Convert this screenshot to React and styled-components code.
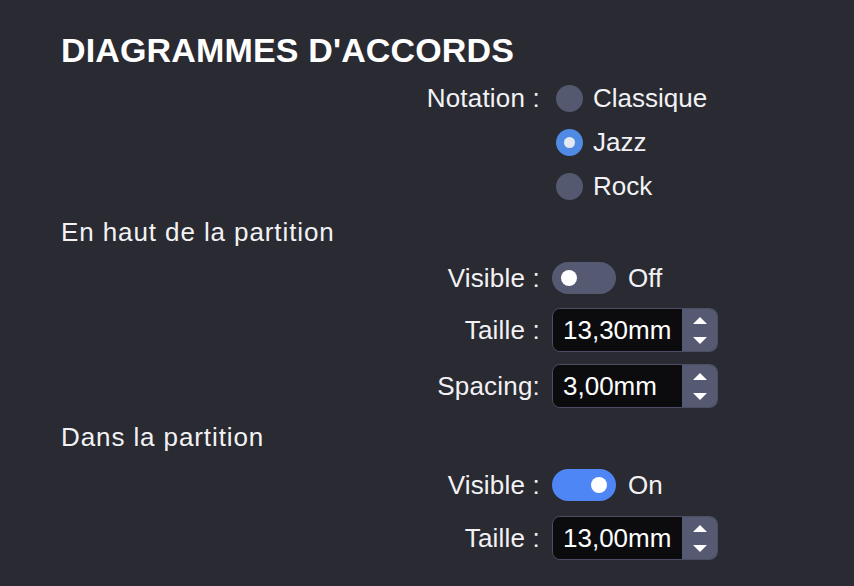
import React from 'react';
import styled, { createGlobalStyle } from 'styled-components';

const GlobalStyle = createGlobalStyle`
	html, body {
		margin: 0;
		padding: 0;
		background: #2a2a32;
	}
	body {
		font-family: 'Liberation Sans', Arial, sans-serif;
		color: #f2f2f4;
	}
`;

const Page = styled.div`
	width: 854px;
	height: 586px;
	overflow: hidden;
	background: #2a2a32;
	display: flex;
	flex-direction: column;
`;

const Title = styled.h1`
	margin: 28px 0 4px;
	height: 44px;
	padding-left: 61px;
	font-size: 34px;
	font-weight: 700;
	letter-spacing: 0.15px;
	line-height: 44px;
	color: #ffffff;
`;

const Section = styled.div`
	height: ${(props) => props.h}px;
	padding-left: 61px;
	display: flex;
	align-items: center;
	font-size: 26px;
	letter-spacing: 0.9px;
`;

const Row = styled.div`
	height: ${(props) => props.h}px;
	display: grid;
	grid-template-columns: 540px auto;
	align-items: center;
`;

const Label = styled.span`
	justify-self: end;
	font-size: 26px;
	letter-spacing: 0.2px;
	white-space: nowrap;
`;

const Control = styled.div`
	display: flex;
	align-items: center;
	padding-left: 12px;
	font-size: 26px;
`;

const RadioDot = styled.span`
	width: 27px;
	height: 27px;
	margin-left: 4px;
	margin-right: 10px;
	border-radius: 50%;
	background: ${(props) => (props.checked ? '#4f8be4' : '#555970')};
	display: flex;
	align-items: center;
	justify-content: center;

	&::after {
		content: '';
		display: ${(props) => (props.checked ? 'block' : 'none')};
		width: 11px;
		height: 11px;
		border-radius: 50%;
		background: #e4e9f1;
	}
`;

const Toggle = styled.span`
	width: 64px;
	height: 32px;
	border-radius: 16px;
	background: ${(props) => (props.on ? '#4f86f5' : '#555972')};
	display: flex;
	align-items: center;
	justify-content: ${(props) => (props.on ? 'flex-end' : 'flex-start')};
	padding: 0 9px;
	box-sizing: border-box;
	margin-right: 12px;

	&::after {
		content: '';
		width: 16px;
		height: 16px;
		border-radius: 50%;
		background: #ffffff;
	}
`;

const Spin = styled.div`
	width: 166px;
	height: 44px;
	box-sizing: border-box;
	border: 1px solid #4b4e64;
	border-radius: 8px;
	overflow: hidden;
	display: flex;
`;

const Field = styled.div`
	flex: 1;
	background: #0c0c0e;
	display: flex;
	align-items: center;
	padding-left: 10px;
	font-size: 26px;
	color: #ffffff;
`;

const Stepper = styled.div`
	width: 35px;
	background: #555971;
	display: flex;
	flex-direction: column;
	align-items: center;
	justify-content: center;
	gap: 13px;
`;

const Arrow = ({ down }) => (
	<svg width="14" height="7" viewBox="0 0 14 7">
		<path d={down ? 'M0 0 L14 0 L7 7 Z' : 'M0 7 L14 7 L7 0 Z'} fill="#ffffff" />
	</svg>
);

const Radio = ({ checked, children }) => (
	<Control>
		<RadioDot checked={checked} />
		{children}
	</Control>
);

const Switch = ({ on }) => (
	<Control>
		<Toggle on={on} />
		{on ? 'On' : 'Off'}
	</Control>
);

const SpinBox = ({ value }) => (
	<Control>
		<Spin>
			<Field>{value}</Field>
			<Stepper>
				<Arrow />
				<Arrow down />
			</Stepper>
		</Spin>
	</Control>
);

const App = () => {
	return (
		<Page>
			<GlobalStyle />
			<Title>DIAGRAMMES D'ACCORDS</Title>
			<Row h={44}>
				<Label>Notation :</Label>
				<Radio>Classique</Radio>
			</Row>
			<Row h={44}>
				<span />
				<Radio checked>Jazz</Radio>
			</Row>
			<Row h={44}>
				<span />
				<Radio>Rock</Radio>
			</Row>
			<Section h={48}>En haut de la partition</Section>
			<Row h={44}>
				<Label>Visible :</Label>
				<Switch />
			</Row>
			<Row h={60}>
				<Label>Taille :</Label>
				<SpinBox value="13,30mm" />
			</Row>
			<Row h={52}>
				<Label>Spacing:</Label>
				<SpinBox value="3,00mm" />
			</Row>
			<Section h={50}>Dans la partition</Section>
			<Row h={46}>
				<Label>Visible :</Label>
				<Switch on />
			</Row>
			<Row h={60}>
				<Label>Taille :</Label>
				<SpinBox value="13,00mm" />
			</Row>
		</Page>
	);
};

export default App;
